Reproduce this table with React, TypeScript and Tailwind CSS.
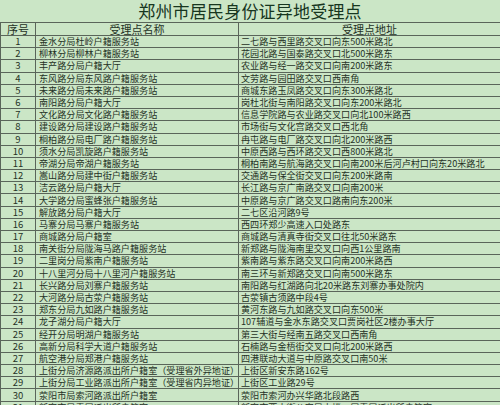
export default function App() {
  const rows: [string, string][] = [
    ["金水分局杜岭户籍服务站", "二七路与西里路交叉口向东500米路北"],
    ["柳林分局柳林户籍服务站", "花园北路与国泰路交叉口北500米路东"],
    ["丰产路分局户籍大厅", "农业路与经一路交叉口向南200米路东"],
    ["东风路分局东风路户籍服务站", "文劳路与园田路交叉口西南角"],
    ["未来路分局未来路户籍服务站", "商城东路玉凤路交叉口向东300米路北"],
    ["南阳路分局户籍大厅", "岗杜北街与南阳路交叉口向东200米路北"],
    ["文化路分局文化路户籍服务站", "信息学院路与农业路交叉口向北100米路西"],
    ["建设路分局建设路户籍服务站", "市场街与文化宫路交叉口西北角"],
    ["桐柏路分局电厂路户籍服务站", "冉屯路与电厂路交叉口向北200米路西"],
    ["须水分局凯旋路户籍服务站", "中原西路与西环路交叉口西800米路北"],
    ["帝湖分局帝湖户籍服务站", "桐柏南路与航海路交叉口向南200米后河卢村口向东20米路北"],
    ["嵩山路分局建中街户籍服务站", "交通路与保全街交叉口向东200米路南"],
    ["洁云路分局户籍大厅", "长江路与京广南路交叉口向南200米"],
    ["大学路分局蜜蜂张户籍服务站", "中原路与京广路交叉口路南向东200米"],
    ["解放路分局户籍大厅", "二七区沿河路9号"],
    ["马寨分局马寨户籍服务站", "西四环郑少高速入口处路东"],
    ["商城路分局户籍室", "商城路与清真寺街交叉口往北50米路东"],
    ["南关街分局陇海马路户籍服务站", "新郑路与陇海南里交叉口向西1公里路南"],
    ["二里岗分局紫南户籍服务站", "紫南路与紫东路交叉口向南200米路西"],
    ["十八里河分局十八里河户籍服务站", "南三环与新郑路交叉口向南500米路东"],
    ["长兴路分局刘寨户籍服务站", "南阳路与红湖路向北20米路东刘寨办事处院内"],
    ["大河路分局古荥户籍服务站", "古荥镇古须路中段4号"],
    ["郑东分局九如路户籍服务站", "黄河东路与九如路交叉口向东500米"],
    ["龙子湖分局户籍大厅", "107辅道与金水东路交叉口贾岗社区2楼办事大厅"],
    ["经开分局明湖户籍服务站", "第三大街与经南五路交叉口西南角"],
    ["高新分局科学大道户籍服务站", "石楠路与金梧街交叉口向北200米路西"],
    ["航空港分局郑港户籍服务站", "四港联动大道与中原路交叉口南50米"],
    ["上街分局济源路派出所户籍室（受理省外异地证）", "上街区新安东路162号"],
    ["上街分局工业路派出所户籍室（受理省内异地证）", "上街区工业路29号"],
    ["荥阳市局索河路派出所户籍室", "荥阳市索河办兴华路北段路西"],
    ["新密市局青屏派出所户籍室", "新密市西大街公安局大楼一层青屏派出所户籍室"],
  ];

  return (
    <div
      className="w-[500px] h-[405px] overflow-hidden bg-[#cbe6c6] text-[#253225]"
      style={{ fontFamily: '"Noto Sans CJK SC", "Noto Sans", sans-serif' }}
    >
      {/* Title */}
      <div className="h-[22px] flex items-center justify-center text-[17px] leading-[20px] text-[#17361f] tracking-[0.2px]">
        郑州市居民身份证异地受理点
      </div>

      {/* Header */}
      <div className="grid grid-cols-[35px_203px_1fr] h-[14px] border-t border-b border-l border-[#5a655a] text-[11px] leading-[12px]">
        <div className="flex items-center justify-center border-r border-[#5a655a]">序号</div>
        <div className="flex items-center justify-center border-r border-[#5a655a]">受理点名称</div>
        <div className="flex items-center justify-center">受理点地址</div>
      </div>

      {/* Rows */}
      {rows.map(([name, addr], i) => (
        <div
          key={i}
          className="grid grid-cols-[35px_203px_1fr] h-[12.2px] border-b border-l border-[#5a655a] text-[9.1px] leading-[11px]"
        >
          <div className="flex items-center justify-center border-r border-[#5a655a] text-[9.5px]">
            {i + 1}
          </div>
          <div className="flex items-center pl-[3px] border-r border-[#5a655a] whitespace-nowrap">
            {name}
          </div>
          <div className="flex items-center pl-[2px] whitespace-nowrap">
            {addr}
          </div>
        </div>
      ))}
    </div>
  );
}
